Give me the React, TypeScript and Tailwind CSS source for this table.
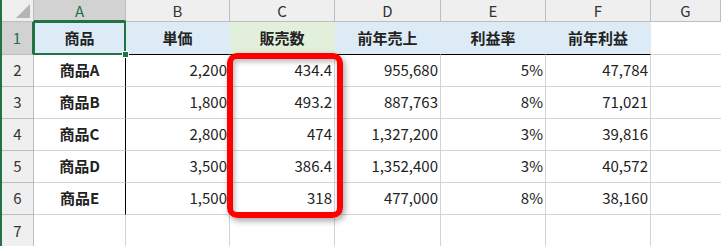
const cols = ["A", "B", "C", "D", "E", "F", "G"];
const widths = ["w-[92px]", "w-[104px]", "w-[105px]", "w-[106px]", "w-[105px]", "w-[105px]", "flex-1"];

const head = ["商品", "単価", "販売数", "前年売上", "利益率", "前年利益"];
const rows = [
  ["商品A", "2,200", "434.4", "955,680", "5%", "47,784"],
  ["商品B", "1,800", "493.2", "887,763", "8%", "71,021"],
  ["商品C", "2,800", "474", "1,327,200", "3%", "39,816"],
  ["商品D", "3,500", "386.4", "1,352,400", "3%", "40,572"],
  ["商品E", "1,500", "318", "477,000", "8%", "38,160"],
];

const font = { fontFamily: '"Noto Sans CJK JP", "Noto Sans", sans-serif' };

export default function App() {
  return (
    <div className="relative w-[721px] h-[246px] overflow-hidden bg-white text-[15px] text-[#222]" style={font}>
      <div className="flex h-full border-l-2 border-[#217346]">
        <div className="flex flex-col w-full">
          {/* column headers */}
          <div className="flex h-[22px] bg-[#efefef]">
            <div className="relative w-[32px] shrink-0 border-r border-b border-[#bdbdbd]">
              <div className="absolute right-[3px] bottom-[3px] w-0 h-0 border-l-[14px] border-l-transparent border-b-[14px] border-b-[#b4b4b4]" />
            </div>
            {cols.map((c, i) => (
              <div
                key={c}
                className={`${widths[i]} shrink-0 flex items-center justify-center border-r border-[#bdbdbd] ${
                  i === 0 ? "bg-[#d2d2d2] text-[#217346] border-b-2 border-b-[#217346]" : "border-b text-[#333]"
                }`}
              >
                <span className="leading-none">{c}</span>
              </div>
            ))}
          </div>

          {/* row 1 */}
          <div className="flex h-[33px]">
            <div className="w-[32px] shrink-0 flex items-center justify-center bg-[#d2d2d2] text-[#217346] border-r-2 border-r-[#217346] border-b border-[#bdbdbd]">
              1
            </div>
            {head.map((h, i) => (
              <div
                key={h}
                className={`${widths[i]} shrink-0 flex items-center justify-center font-bold border-r border-r-transparent border-b border-b-black ${
                  i === 2 ? "bg-[#e2efda]" : "bg-[#ddebf7]"
                } ${i === 0 ? "relative" : ""}`}
              >
                {h}
                {i === 0 && (
                  <div className="absolute -left-px -top-px -right-px -bottom-px border-2 border-[#217346]">
                    <div className="absolute -right-[5px] -bottom-[5px] w-[7px] h-[7px] bg-[#217346] border border-white" />
                  </div>
                )}
              </div>
            ))}
            <div className="flex-1 border-b border-[#d4d4d4]" />
          </div>

          {/* data rows */}
          {rows.map((r, ri) => (
            <div key={ri} className="flex h-[32px]">
              <div className="w-[32px] shrink-0 flex items-center justify-center bg-[#efefef] border-r border-b border-[#bdbdbd] text-[#333]">
                {ri + 2}
              </div>
              {r.map((v, ci) => (
                <div
                  key={ci}
                  className={`${widths[ci]} shrink-0 flex items-center border-b border-[#d4d4d4] border-r ${
                    ci === 0 ? "justify-center font-bold border-r-black" : "justify-end pr-[2px] border-r-[#d4d4d4]"
                  }`}
                >
                  {v}
                </div>
              ))}
              <div className="flex-1 border-b border-[#d4d4d4]" />
            </div>
          ))}

          {/* row 7 */}
          <div className="flex flex-1">
            <div className="w-[32px] shrink-0 flex items-start pt-[5px] justify-center bg-[#efefef] border-r border-[#bdbdbd] text-[#333]">
              7
            </div>
            {cols.slice(0, 6).map((c, i) => (
              <div key={c} className={`${widths[i]} shrink-0 border-r border-[#d4d4d4]`} />
            ))}
          </div>
        </div>
      </div>

      {/* highlight frame */}
      <div className="absolute left-[227px] top-[53px] w-[116px] h-[165px] border-[6px] border-[#ff0000] rounded-[10px] shadow-[2px_3px_6px_rgba(0,0,0,0.35),inset_2px_3px_5px_rgba(0,0,0,0.25)]" />
    </div>
  );
}
